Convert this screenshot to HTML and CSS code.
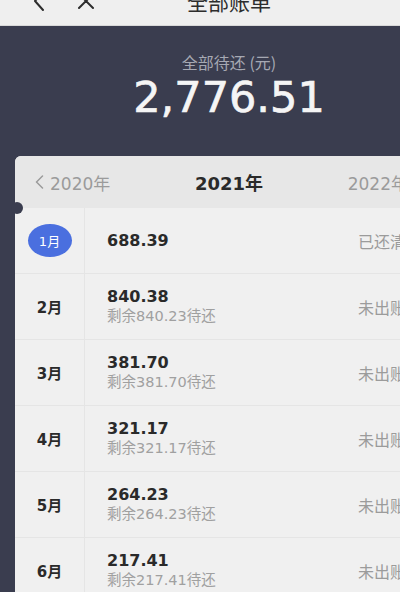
FILE: index.html
```html
<!DOCTYPE html>
<html lang="zh-CN">
<head>
<meta charset="UTF-8" />
<meta name="viewport" content="width=device-width, initial-scale=1" />
<title>全部账单</title>
<link rel="stylesheet" href="styles.css">
</head>
<body>
  <div class="page">
    <div class="topbar">
      <div class="nav-icons">
        <svg class="icon-back" viewBox="0 0 14 22"><path d="M11 2 L3 11 L11 20" /></svg>
        <svg class="icon-close" viewBox="0 0 20 20"><path d="M3 3 L17 17 M17 3 L3 17" /></svg>
      </div>
      <div class="title">全部账单</div>
      <div></div>
    </div>

    <div class="summary">
      <div class="summary-label">全部待还 (元)</div>
      <div class="summary-amount">2,776.51</div>
    </div>

    <div class="bill-card">
      <span class="notch"></span>
      <div class="years">
        <div class="year side">
          <svg class="chev" viewBox="0 0 8 14"><path d="M7 1 L1 7 L7 13" /></svg>
          2020年
        </div>
        <div class="year current">2021年</div>
        <div class="year side">
          2022年
          <svg class="chev" viewBox="0 0 8 14"><path d="M1 1 L7 7 L1 13" /></svg>
        </div>
      </div>

      <div class="row">
        <div class="month"><span class="badge">1月</span></div>
        <div class="amounts">
          <div class="amount">688.39</div>
        </div>
        <div class="status">已还清</div>
      </div>

      <div class="row">
        <div class="month">2月</div>
        <div class="amounts">
          <div class="amount">840.38</div>
          <div class="remain">剩余840.23待还</div>
        </div>
        <div class="status">未出账</div>
      </div>

      <div class="row">
        <div class="month">3月</div>
        <div class="amounts">
          <div class="amount">381.70</div>
          <div class="remain">剩余381.70待还</div>
        </div>
        <div class="status">未出账</div>
      </div>

      <div class="row">
        <div class="month">4月</div>
        <div class="amounts">
          <div class="amount">321.17</div>
          <div class="remain">剩余321.17待还</div>
        </div>
        <div class="status">未出账</div>
      </div>

      <div class="row">
        <div class="month">5月</div>
        <div class="amounts">
          <div class="amount">264.23</div>
          <div class="remain">剩余264.23待还</div>
        </div>
        <div class="status">未出账</div>
      </div>

      <div class="row">
        <div class="month">6月</div>
        <div class="amounts">
          <div class="amount">217.41</div>
          <div class="remain">剩余217.41待还</div>
        </div>
        <div class="status">未出账</div>
      </div>
    </div>
  </div>
</body>
</html>
```

FILE: styles.css
```css
html, body {
  margin: 0;
  width: 400px;
  height: 592px;
  overflow: hidden;
}

body {
  background: #3a3d4f;
  font-family: "DejaVu Sans", "Noto Sans CJK SC", sans-serif;
}

.page {
  width: 458px;
  min-height: 592px;
  background: #3a3d4f;
}

.topbar {
  height: 48px;
  margin-top: -23px;
  background: #efefef;
  border-bottom: 1px solid #d9d9d9;
  display: grid;
  grid-template-columns: 1fr auto 1fr;
  align-items: center;
}

.nav-icons {
  display: flex;
  align-items: center;
  gap: 30px;
  padding-left: 32px;
}

.nav-icons svg {
  fill: none;
  stroke: #2d2d2d;
  stroke-width: 2;
  stroke-linecap: round;
  stroke-linejoin: round;
}

.icon-back {
  width: 14px;
  height: 22px;
}

.icon-close {
  width: 20px;
  height: 20px;
}

.title {
  font-family: "Noto Sans CJK SC", sans-serif;
  font-size: 21px;
  line-height: 26px;
  color: #2d2d2d;
}

.summary {
  padding-top: 28px;
  text-align: center;
}

.summary-label {
  font-family: "Noto Sans CJK SC", sans-serif;
  font-size: 16px;
  line-height: 16px;
  color: #a6a9b3;
}

.summary-amount {
  margin-top: 2px;
  font-size: 43px;
  line-height: 50px;
  color: #f5f5f5;
  -webkit-text-stroke: 0.7px #f5f5f5;
}

.bill-card {
  position: relative;
  margin: 34px 15px 0;
  background: #f0f0f0;
  border-radius: 6px 6px 0 0;
}

.notch {
  position: absolute;
  left: -4px;
  top: 46px;
  width: 12px;
  height: 12px;
  border-radius: 50%;
  background: #3a3d4f;
}

.years {
  height: 52px;
  background: #e7e7e7;
  border-radius: 6px 6px 0 0;
  display: flex;
  justify-content: space-between;
  align-items: center;
  padding: 0 20px;
}

.year {
  display: flex;
  align-items: center;
  gap: 6px;
}

.year.side {
  font-size: 17px;
  color: #9b9b9b;
}

.year.current {
  font-size: 18px;
  font-weight: bold;
  color: #2a2a2a;
}

.chev {
  width: 9px;
  height: 14px;
  fill: none;
  stroke: #9b9b9b;
  stroke-width: 1.5;
  stroke-linecap: round;
  stroke-linejoin: round;
}

.row {
  height: 66px;
  display: grid;
  grid-template-columns: 70px 1fr auto;
  align-items: center;
  border-bottom: 1px solid #e5e5e5;
  box-sizing: border-box;
  padding-right: 15px;
}

.month {
  height: 100%;
  display: flex;
  justify-content: center;
  align-items: center;
  border-right: 1px solid #e5e5e5;
  font-size: 15px;
  font-weight: bold;
  color: #2a2a2a;
}

.badge {
  width: 44px;
  height: 33px;
  border-radius: 50%;
  background: #4a6fdf;
  color: #fff;
  font-size: 13px;
  font-weight: normal;
  display: flex;
  justify-content: center;
  align-items: center;
}

.amounts {
  padding-left: 22px;
}

.amount {
  font-size: 16px;
  font-weight: bold;
  line-height: 20px;
  color: #2a2a2a;
}

.remain {
  font-size: 14.5px;
  line-height: 19px;
  color: #a0a0a0;
}

.status {
  font-family: "Noto Sans CJK SC", sans-serif;
  font-size: 16px;
  color: #9b9b9b;
  width: 70px;
  white-space: nowrap;
}
```
